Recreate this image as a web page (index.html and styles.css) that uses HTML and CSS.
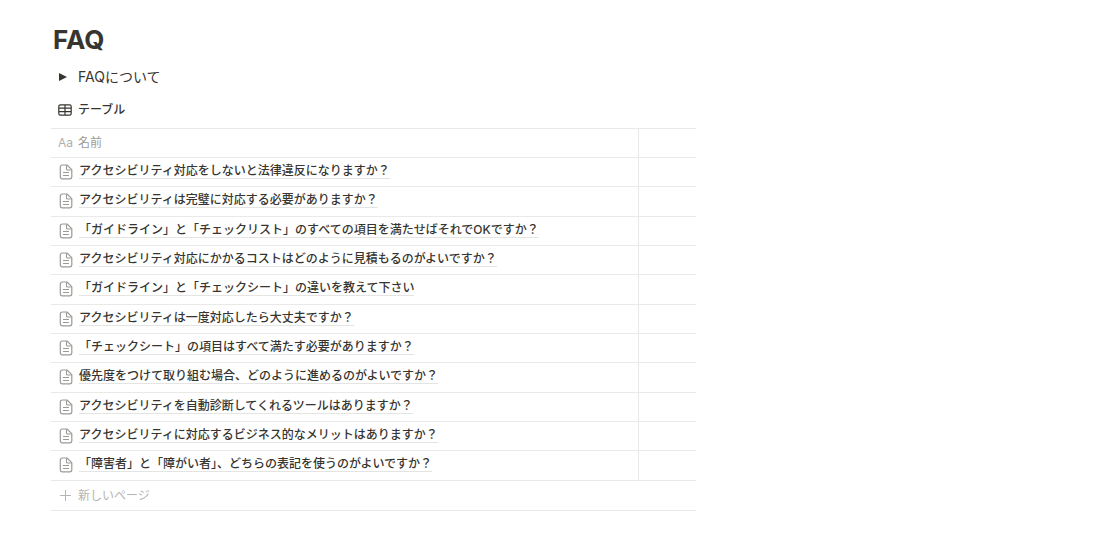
FILE: index.html
```html
<!DOCTYPE html>
<html lang="ja">
<head>
<meta charset="utf-8">
<meta name="viewport" content="width=device-width, initial-scale=1">
<title>FAQ</title>
<link rel="stylesheet" href="styles.css">
</head>
<body>
<svg class="symbols" aria-hidden="true">
  <symbol id="page" viewBox="0 0 14 16">
    <path d="M3.300 1h4.700L12.800 5.600v7.200a2 2 0 0 1-2 2H3.300a2 2 0 0 1-2-2V3a2 2 0 0 1 2-2Z" fill="none" stroke="currentColor" stroke-width="1.200" stroke-linejoin="round"/>
    <path d="M7.500 1.300v3.700a1 1 0 0 0 1 1h4M4 8.500h6M4 11.500h6" fill="none" stroke="currentColor" stroke-width="1.100"/>
  </symbol>
</svg>
<main class="page">
  <h1 class="title">FAQ</h1>
  <details class="toggle">
    <summary class="toggle-label"><svg class="triangle" viewBox="0 0 8 8" aria-hidden="true"><path d="M0 0 8 4 0 8Z" fill="currentColor"/></svg>FAQについて</summary>
  </details>
  <button class="view" type="button">
    <svg class="view-icon" viewBox="0 0 14 12" aria-hidden="true"><path d="M2.400.8h9.200a1.600 1.600 0 0 1 1.600 1.600v7.200a1.600 1.600 0 0 1-1.600 1.600H2.400A1.600 1.600 0 0 1 .8 9.600V2.400A1.600 1.600 0 0 1 2.400.8ZM1 4.200h12M1 7.700h12M7 1v10" fill="none" stroke="currentColor" stroke-width="1.200"/></svg>テーブル
  </button>
  <table class="faq">
    <thead>
      <tr><th class="name" scope="col"><span class="cell"><span class="type" aria-hidden="true">Aa</span>名前</span></th><td class="extra"></td></tr>
    </thead>
    <tbody>
      <tr><td class="name"><span class="cell"><svg class="doc" aria-hidden="true"><use href="#page"/></svg><a class="link" href="#">アクセシビリティ対応をしないと法律違反になりますか？</a></span></td><td class="extra"></td></tr>
      <tr><td class="name"><span class="cell"><svg class="doc" aria-hidden="true"><use href="#page"/></svg><a class="link" href="#">アクセシビリティは完璧に対応する必要がありますか？</a></span></td><td class="extra"></td></tr>
      <tr><td class="name"><span class="cell"><svg class="doc" aria-hidden="true"><use href="#page"/></svg><a class="link" href="#">「ガイドライン」と「チェックリスト」のすべての項目を満たせばそれでOKですか？</a></span></td><td class="extra"></td></tr>
      <tr><td class="name"><span class="cell"><svg class="doc" aria-hidden="true"><use href="#page"/></svg><a class="link" href="#">アクセシビリティ対応にかかるコストはどのように見積もるのがよいですか？</a></span></td><td class="extra"></td></tr>
      <tr><td class="name"><span class="cell"><svg class="doc" aria-hidden="true"><use href="#page"/></svg><a class="link" href="#">「ガイドライン」と「チェックシート」の違いを教えて下さい</a></span></td><td class="extra"></td></tr>
      <tr><td class="name"><span class="cell"><svg class="doc" aria-hidden="true"><use href="#page"/></svg><a class="link" href="#">アクセシビリティは一度対応したら大丈夫ですか？</a></span></td><td class="extra"></td></tr>
      <tr><td class="name"><span class="cell"><svg class="doc" aria-hidden="true"><use href="#page"/></svg><a class="link" href="#">「チェックシート」の項目はすべて満たす必要がありますか？</a></span></td><td class="extra"></td></tr>
      <tr><td class="name"><span class="cell"><svg class="doc" aria-hidden="true"><use href="#page"/></svg><a class="link" href="#">優先度をつけて取り組む場合、どのように進めるのがよいですか？</a></span></td><td class="extra"></td></tr>
      <tr><td class="name"><span class="cell"><svg class="doc" aria-hidden="true"><use href="#page"/></svg><a class="link" href="#">アクセシビリティを自動診断してくれるツールはありますか？</a></span></td><td class="extra"></td></tr>
      <tr><td class="name"><span class="cell"><svg class="doc" aria-hidden="true"><use href="#page"/></svg><a class="link" href="#">アクセシビリティに対応するビジネス的なメリットはありますか？</a></span></td><td class="extra"></td></tr>
      <tr><td class="name"><span class="cell"><svg class="doc" aria-hidden="true"><use href="#page"/></svg><a class="link" href="#">「障害者」と「障がい者」、どちらの表記を使うのがよいですか？</a></span></td><td class="extra"></td></tr>
    </tbody>
  </table>
  <button class="new-page" type="button">
    <svg class="plus" viewBox="0 0 11 11" aria-hidden="true"><path d="M5.500 0v11M0 5.500h11" stroke="currentColor"/></svg>新しいページ
  </button>
</main>
</body>
</html>
```
FILE: styles.css
```css
* {
  box-sizing: border-box;
}

body {
  margin: 0;
  background: #fff;
  color: #37352f;
  font: 12px/16px Inter, "Noto Sans CJK JP", sans-serif;
}

.symbols {
  display: none;
}

.page {
  max-width: 696px;
  padding: 24px 0 24px 51px;
}

.title {
  margin: 0;
  padding-left: 2px;
  font-size: 26px;
  line-height: 32px;
  font-weight: 700;
}

.toggle {
  margin-top: 11px;
}

.toggle-label {
  display: flex;
  align-items: center;
  padding-left: 8px;
  font-size: 14px;
  line-height: 20px;
  list-style: none;
  cursor: pointer;
}

.triangle {
  width: 8px;
  height: 8px;
  margin-right: 11px;
}

.view,
.new-page {
  display: flex;
  align-items: center;
  border: 0;
  background: none;
  font: inherit;
  cursor: pointer;
}

.view {
  margin-top: 11px;
  padding: 4px 7px;
  color: #37352f;
  font-weight: 500;
}

.view-icon {
  width: 14px;
  height: 12px;
  margin-right: 6px;
}

.faq {
  width: 100%;
  margin-top: 6px;
  border-top: 1px solid #e9e9e7;
  border-spacing: 0;
  table-layout: fixed;
}

.faq th,
.faq td {
  height: 29px;
  padding: 0;
  border-bottom: 1px solid #e9e9e7;
  text-align: left;
}

.faq tbody tr:nth-child(3n + 2) td {
  height: 30px;
}

.faq .extra {
  width: 9%;
  border-left: 1px solid #e9e9e7;
}

.cell {
  display: flex;
  align-items: center;
  padding-left: 7px;
}

td .cell {
  padding-bottom: 2px;
}

th .cell {
  color: #9b9a97;
  font-weight: 400;
}

.type {
  width: 20px;
  color: #b0afac;
}

.doc {
  width: 14px;
  height: 16px;
  margin: 1px 6px 0 1px;
  color: #9b9a97;
}

.link {
  border-bottom: 1px solid #e4e4e2;
  color: inherit;
  font-weight: 500;
  line-height: 14px;
  text-decoration: none;
}

.new-page {
  width: 100%;
  height: 30px;
  padding: 0 9px;
  border-bottom: 1px solid #e9e9e7;
  color: #b5b4b2;
}

.plus {
  width: 11px;
  height: 11px;
  margin-right: 7px;
}
```
